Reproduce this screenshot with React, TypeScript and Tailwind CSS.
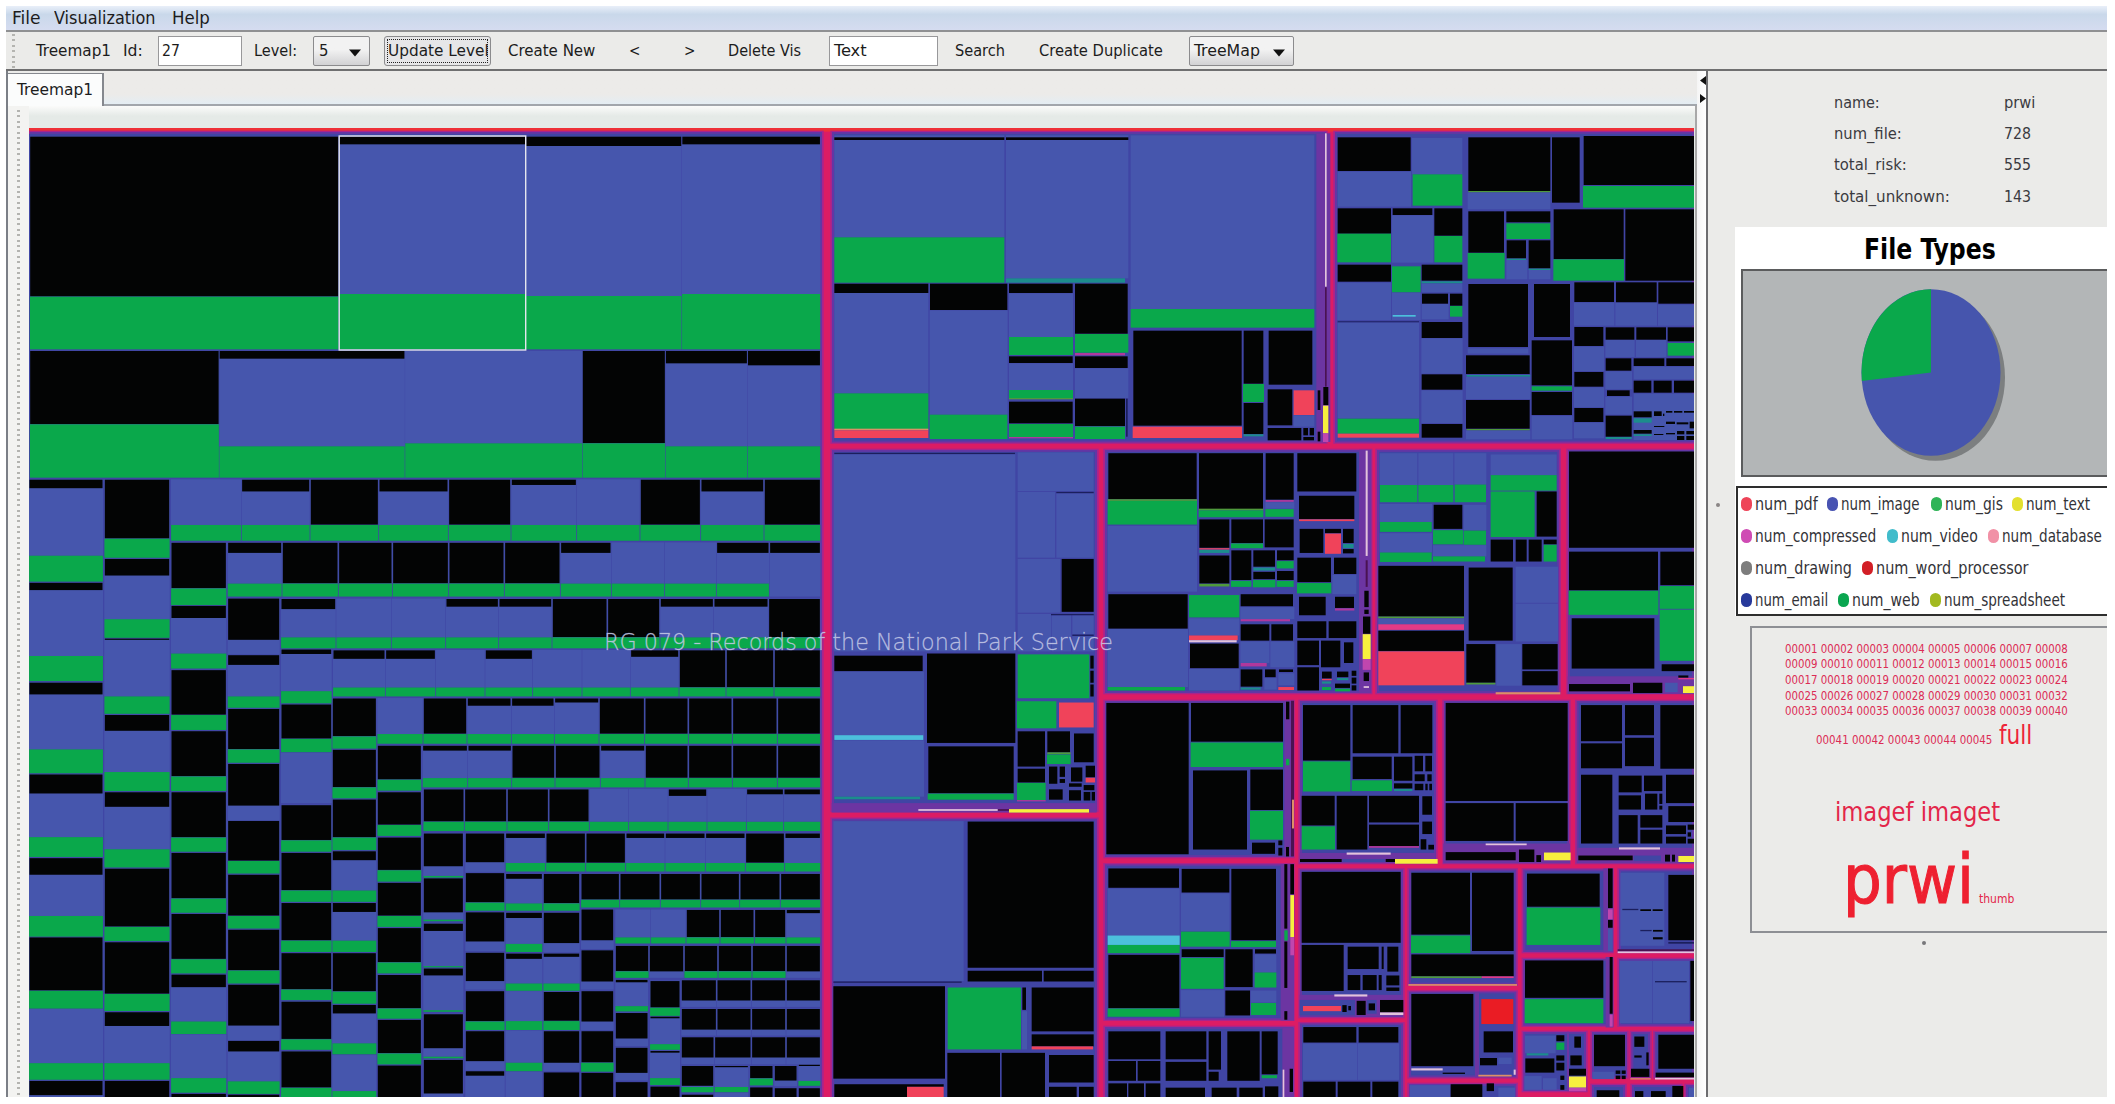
import { useLayoutEffect, useRef } from 'react';
import type { ReactNode } from 'react';

/* Text stretched horizontally to an exact width. */
function Fit({ w, className = '', children }: { w: number; className?: string; children: ReactNode }) {
  const ref = useRef<HTMLSpanElement>(null);
  useLayoutEffect(() => {
    const el = ref.current;
    if (el && el.offsetWidth) el.style.transform = `scaleX(${w / el.offsetWidth})`;
  }, [w]);
  return (
    <span className={'block shrink-0 whitespace-pre ' + className} style={{ width: w }}>
      <span ref={ref} className="inline-block origin-left whitespace-pre">
        {children}
      </span>
    </span>
  );
}

const COLORS: Record<string, string> = {
  k: '#030404',
  b: '#4656ad',
  g: '#0aa84b',
  t: '#1c8d8c',
  c: '#4cc0dc',
  p: '#f0435a',
  q: '#e23a86',
  m: '#b0389c',
  v: '#c046ae',
  w: '#e3c3dc',
  y: '#f7ef3e',
  o: '#4f9a3c',
  n: '#1b1f5c',
  s: '#dc8f66',
  r: '#ea1c24',
  d: '#4a1252',
  u: '#6c35a2',
  i: '#4046a4',
};

type Rect = { c: string; x0: number; y0: number; x1: number; y1: number };

function parse(src: string): Rect[] {
  return src
    .split(/[;\n]/)
    .map((s) => s.trim())
    .filter(Boolean)
    .map((s) => {
      const [c, ...n] = s.split(/\s+/);
      const [x0, y0, x1, y1] = n.map(Number);
      return { c, x0, y0, x1, y1 };
    });
}

/* One directory: unknown share on top, images in the middle, web files at the bottom. */
function cell(x0: number, y0: number, x1: number, y1: number, yb: number, yg: number, ix: number, iy: number): Rect[] {
  const out: Rect[] = [];
  const l = x0 + ix;
  const r = x1 - ix;
  const full = yb >= yg;
  if (!full || yb < y1) out.push({ c: 'b', x0: x0 + ix / 3, y0: y0 - iy / 2, x1: x1 - ix / 3, y1: yg });
  if (yb > y0) out.push({ c: 'k', x0: l, y0, x1: r, y1: Math.min(yb, yg) - (full && yg < y1 ? 1 : 0) });
  if (yg < y1) out.push({ c: 'g', x0: x0 + ix / 2, y0: yg, x1: x1 - ix / 2, y1 });
  return out;
}

const F = 9999;

function row(y0: number, yg: number, y1: number, xs: number[], tops: number[], bare: number[] = []): Rect[] {
  return tops.flatMap((t, i) => {
    const g = bare.includes(i) ? y1 : yg;
    const top = t === F ? (bare.includes(i) ? yg : g) : t;
    return cell(xs[i], y0, xs[i + 1], y1, top, g, 2.4, 2);
  });
}

function column(x0: number, x1: number, cells: number[][]): Rect[] {
  return cells.flatMap(([a, b, g, e]) => cell(x0, a, x1, e ?? g, b, g, 2.4, 2));
}

const topRows: Rect[] = [
  [56, 50, 640, 688, 530, 530],
  [640, 50, 993, 688, 73, 522],
  [993, 50, 1288, 688, 78, 528],
  [1288, 50, 1550, 688, 73, 522],
  [56, 693, 414, 1073, 913, 913],
  [414, 693, 765, 1073, 716, 979],
  [765, 693, 1100, 1073, 0, 970],
  [1100, 693, 1257, 1073, 970, 970],
  [1257, 693, 1412, 1073, 730, 979],
  [1412, 693, 1550, 1073, 736, 979],
].flatMap(([a, b, c, d, e, f]) => cell(a, b, c, d, e, f, 1, 1));

const leftCells: Rect[] = [
  ...column(86, 310, [[24, 45, 212, 276], [279, 297, 460, 522], [526, 555, 691, 750], [753, 800, 908, 957], [960, 1001, 1103, 1154], [1156, 1288, 1288, 1332], [1334, 0, 1467, 1508], [1511, 1546, 1554]]),
  ...column(312, 510, [[24, 170, 170, 217], [220, 261, 369, 415], [417, 420, 560, 603], [606, 645, 747, 794], [797, 833, 938, 983], [986, 1130, 1130, 1165], [1168, 1296, 1296, 1338], [1341, 1375, 1467, 1508], [1511, 1554, 1554]]),
  ...row(24, 136, 175, [512, 724, 930, 1136, 1345, 1533, 1730, 1920, 2102, 2292, 2462], [0, 53, F, 53, F, 37, 0, F, 53, F]),
  ...row(180, 281, 313, [682, 846, 1015, 1177, 1346, 1513, 1681, 1834, 1994, 2149, 2308, 2462], [205, F, F, F, F, F, 205, 0, 0, 205, 205], [10]),
  ...column(512, 680, [[180, 293, 293, 334], [336, 366, 454, 491], [495, 606, 606, 643], [646, 758, 758, 794], [797, 909, 909, 944], [947, 1060, 1060, 1095], [1098, 1210, 1210, 1245], [1248, 1279, 1364, 1395], [1397, 0, 1504, 1540], [1543, 1554, 1554]]),
  ...column(682, 840, [[318, 420, 456], [458, 482, 560, 588], [591, 691, 691, 724], [727, 830, 866], [868, 967, 967, 998], [1001, 1103, 1103, 1134], [1137, 1238, 1238, 1270], [1273, 1374, 1410], [1412, 1438, 1512, 1543], [1545, 1554, 1554]]),
  ...row(319, 414, 441, [842, 1008, 1174, 1337, 1496, 1656, 1822, 1980, 2141, 2305, 2462], [344, 0, 0, 338, 338, F, F, 338, 338, F]),
  ...row(446, 538, 560, [998, 1156, 1307, 1455, 1598, 1746, 1891, 2037, 2178, 2322, 2462], [467, 467, 0, 467, 0, 0, 462, F, F, F]),
  ...column(842, 996, [[444, 455, 547, 577], [580, 665, 665, 698], [700, 0, 824], [829, 916, 916, 944], [947, 1040, 1040, 1068], [1071, 1164, 1164, 1192], [1195, 1285, 1285, 1311], [1315, 1408, 1408, 1434], [1438, 1528, 1528, 1554]]),
  ...row(565, 653, 677, [1131, 1269, 1401, 1534, 1663, 1797, 1934, 2065, 2197, 2332, 2462], [0, F, 583, 583, 575, F, F, F, F, F]),
  ...column(996, 1130, [[565, 659, 659, 689], [692, 785, 785, 812], [815, 909, 909, 940], [943, 965, 1040, 1068], [1071, 1093, 1164, 1192], [1195, 1290, 1290, 1320], [1323, 1344, 1418, 1445], [1448, 0, 1536, 1554]]),
  ...row(682, 762, 785, [1267, 1403, 1535, 1665, 1801, 1935, 2065, 2197, 2332, 2462], [694, 694, F, F, 694, F, F, F, F]),
  ...column(1131, 1265, [[682, 766, 766, 793], [797, 878, 878, 905], [909, 990, 990, 1018], [1021, 1103, 1103, 1130], [1133, 1218, 1218, 1245], [1249, 1332, 1332, 1357], [1360, 1443, 1443, 1470], [1473, 1554, 1554]]),
  ...row(790, 870, 893, [1269, 1393, 1521, 1646, 1768, 1886, 2004, 2121, 2239, 2351, 2462], [F, F, F, F, 0, 0, 806, 0, 802, 802]),
  ...row(899, 972, 993, [1516, 1637, 1757, 1877, 1995, 2116, 2236, 2354, 2462], [910, F, F, 910, 910, 910, F, 910]),
  ...column(1269, 1391, [[899, 980, 1004, 1008], [1010, 1094, 1112, 1116], [1122, 1140, 1227, 1230], [1233, 1250, 1336, 1340], [1346, 1430, 1451, 1455], [1459, 1542, 1554]]),
  ...column(1395, 1515, [[899, 970, 994], [997, 1070, 1070, 1090], [1094, 1166, 1190], [1194, 1264, 1285], [1289, 1364, 1364, 1385], [1388, 1462, 1485], [1487, 1498, 1554]]),
  ...row(999, 1063, 1082, [1742, 1859, 1981, 2102, 2219, 2341, 2462], [F, F, F, F, F, F]),
  ...column(1516, 1628, [[999, 1011, 1072, 1090], [1095, 1108, 1172, 1192], [1196, 1209, 1270, 1288], [1290, 0, 1363, 1385], [1387, 0, 1466, 1487], [1489, 0, 1554]]),
  ...column(1629, 1740, [[999, 1072, 1072, 1090], [1095, 1170, 1193], [1196, 1204, 1270, 1288], [1291, 1363, 1363, 1385], [1388, 1466, 1487], [1490, 1554, 1554]]),
  ...row(1088, 1156, 1171, [1845, 1952, 2058, 2160, 2263, 2358, 2462], [0, 0, F, F, F, 1096]),
  ...column(1742, 1842, [[1087, 1163, 1185], [1188, 1265, 1285], [1289, 1364, 1385], [1388, 1466, 1466, 1488], [1491, 1554, 1554]]),
  ...row(1177, 1240, 1256, [1845, 1947, 2052, 2154, 2256, 2358, 2462], [F, F, F, F, F, F], [1, 5]),
  ...column(1845, 1945, [[1261, 1267, 1326, 1339], [1343, 1406, 1425], [1429, 1491, 1510], [1514, 1554, 1554]]),
  ...column(1949, 2041, [[1264, 1330, 1330, 1350], [1352, 1356, 1420, 1434], [1437, 1441, 1504, 1521], [1525, 1554, 1554]]),
  ...row(1262, 1312, 1328, [2043, 2150, 2254, 2358, 2462], [F, F, F, F], [0, 1, 2, 3]),
  ...row(1333, 1384, 1399, [2043, 2150, 2254, 2358, 2462], [F, F, F, F], [0, 1, 2, 3]),
  ...row(1403, 1453, 1470, [2043, 2143, 2254, 2358, 2462], [F, F, F, F], [0, 1, 2, 3]),
  ...column(2043, 2142, [[1474, 1523, 1526, 1539], [1545, 1554, 1554]]),
  ...column(2143, 2246, [[1474, 1477, 1526, 1539], [1541, 0, 1554]]),
  ...column(2248, 2320, [[1474, 1505, 1505, 1522], [1527, 1554, 1554]]),
  ...column(2322, 2392, [[1474, 1510, 1524], [1529, 1554, 1554]]),
  ...column(2394, 2462, [[1471, 1474, 1511, 1523], [1529, 1554, 1554]]),
];

const records = parse(`
b 58 46 568 352;k 58 52 568 60;g 58 352 568 488;b 573 46 940 475;k 573 52 940 60;t 573 475 930 488
b 947 46 1498 567;g 947 567 1498 623
b 58 490 340 820;k 58 491 340 519;g 58 820 340 927;s 58 926 340 931;p 58 931 340 954
k 345 491 577 570;b 344 571 578 884;g 344 884 577 957
k 582 491 773 519;b 582 520 774 651;g 582 651 774 705;k 582 709 773 729;b 582 730 774 810;g 582 810 774 836;o 582 834 774 838
k 582 845 773 910;g 582 912 774 951;m 582 951 774 955
k 780 491 938 641;g 780 642 940 698;m 780 699 930 706;k 780 709 938 744;b 780 745 940 834;k 780 836 930 918;g 780 920 930 957;n 933 836 938 950
k 955 632 1280 917;p 953 920 1281 954;k 1286 632 1345 791;g 1284 792 1347 846;k 1286 849 1345 942;t 1286 943 1345 949
k 1361 632 1492 794;k 1358 808 1432 916;p 1436 811 1498 885;b 1436 886 1498 920;k 1358 924 1459 961
k 1465 924 1479 946;k 1484 924 1497 946;k 1465 951 1497 961;u 1504 40 1546 966;k 1508 811 1516 870;k 1508 935 1516 964
w 1530 40 1535 500;d 1530 502 1535 800;k 1525 801 1540 855;y 1524 857 1540 940;v 1524 940 1540 966`);

const topRight = parse(`
k 248 52 467 153;b 248 155 468 260;b 471 54 622 163;g 473 163 622 257
k 248 265 408 341;g 247 341 408 427;k 413 265 532 285;b 411 286 535 428;k 538 265 622 347;g 538 348 622 427
k 248 434 408 485;b 247 488 408 600;g 411 439 497 517;b 411 518 497 600;c 413 585 482 590
k 500 434 622 482;t 500 484 622 490;b 500 491 622 517;k 501 521 579 551;b 500 552 581 598;k 585 521 622 557;g 585 558 622 590
n 248 604 492 607;b 248 608 492 895;g 248 896 492 941;p 248 941 492 953
k 500 606 622 654;b 499 655 623 761;k 500 763 622 809;b 499 811 623 909;k 500 912 622 953
k 640 52 886 213;o 640 213 886 217;b 638 218 886 268;k 891 52 974 248;k 986 48 1317 195;g 984 198 1317 263
k 640 274 747 398;g 638 399 749 476;k 754 274 886 307;g 754 310 886 357;k 755 361 813 415;t 755 416 813 420;b 754 420 817 478
k 821 361 886 445;t 821 446 886 450;b 821 450 886 478;k 896 268 1106 417;g 895 418 1107 482;k 1111 268 1317 482
k 640 492 819 681;b 638 685 820 701;k 837 492 945 651;k 958 487 1077 546;b 957 548 1078 617;k 1083 487 1205 547;b 1081 548 1206 617;k 1210 487 1317 551;b 1209 554 1317 617
k 633 706 824 762;t 635 765 826 770;b 633 771 826 837;k 633 840 824 926;o 635 927 824 931;b 633 932 826 958
k 830 661 951 796;g 830 799 951 812;k 830 816 951 885;b 830 888 952 958
k 958 621 1045 678;b 957 680 1047 753;k 958 756 1045 800;b 957 802 1047 862;k 958 864 1045 906;b 957 908 1047 955
k 1052 622 1138 659;b 1051 660 1139 711;k 1144 622 1233 659;b 1143 660 1234 711;k 1238 622 1317 664;g 1238 669 1317 707
k 1052 715 1129 752;b 1051 754 1131 808;k 1056 811 1124 828;b 1051 830 1131 884;k 1052 887 1130 950;t 1052 951 1130 957
k 1136 715 1228 738;k 1234 715 1317 738;b 1136 740 1317 778;k 1136 782 1189 818;k 1196 782 1250 818;k 1257 782 1317 818;b 1136 821 1317 960
k 1136 874 1190 892;t 1136 895 1190 908;k 1136 930 1190 941;t 1136 943 1190 948;k 1197 874 1220 888;k 1224 881 1228 888
k 1233 873 1252 878;k 1257 873 1282 878;k 1287 873 1317 878;k 1233 905 1260 912;k 1265 907 1300 913;k 1304 905 1317 925;k 1197 918 1228 921;k 1197 942 1225 945;k 1233 939 1260 943
k 1266 933 1288 943;k 1294 933 1317 943;k 1266 948 1288 960;k 1294 948 1317 960`);

const middle = parse(`
n 58 53 600 56;b 56 57 601 515;b 608 52 836 142;b 608 144 720 297;n 724 144 836 147;b 724 148 836 297;b 608 300 735 425;k 740 300 836 423
b 608 428 708 515;n 708 428 836 431;b 710 432 768 515;b 772 432 836 475;n 772 476 836 479;b 772 480 836 515
k 58 525 323 561;b 56 562 327 710;c 58 710 325 721;b 56 722 327 853;t 58 853 315 859;k 336 520 601 728;k 340 736 596 845;g 338 846 596 860
g 608 522 823 624;k 826 525 836 555;k 826 560 836 588;k 826 592 836 620;g 606 631 724 694;p 732 634 836 692
k 608 701 690 783;k 697 701 765 750;o 697 750 767 754;g 696 755 767 777;k 777 706 836 773;k 608 788 690 820;g 606 821 692 861;m 606 861 692 864
k 702 783 727 823;k 734 783 750 807;k 734 812 750 821;k 768 785 802 818;k 812 781 840 808;p 812 809 840 820;k 702 836 743 860;k 762 822 800 830;k 762 838 798 862
k 806 826 838 838;k 806 842 826 862;k 830 842 840 862;u 50 868 845 890;d 548 882 582 886;w 310 882 548 886;y 582 882 822 890
b 55 910 446 1282;n 55 1283 440 1286;k 458 911 836 1251;k 458 1258 681 1283;k 686 1258 836 1283
k 55 1294 390 1509;g 398 1297 618 1441;k 622 1297 633 1349;b 621 1352 636 1441;k 650 1297 836 1399;k 650 1406 836 1434;p 650 1434 834 1441
k 397 1449 555 1554;k 560 1449 690 1554;k 702 1454 836 1518;k 702 1528 785 1554;k 792 1528 836 1554;k 58 1522 276 1554;k 276 1522 386 1528;p 276 1528 386 1554`);

const center = parse(`
k 40 54 305 161;o 38 161 306 165;g 38 165 306 220;b 38 223 306 376;k 312 54 504 184;o 311 183 505 187;g 311 187 505 203;k 512 54 596 162;m 512 163 596 167;b 511 168 598 183;g 511 184 596 202
k 313 208 403 274;p 313 275 403 278;t 313 279 403 286;k 313 292 403 357;o 313 358 403 364
k 409 208 504 263;g 408 264 504 275;k 509 208 596 273;k 409 280 469 349;g 408 351 469 365;k 475 280 540 318;t 475 320 540 327;k 475 330 540 347;g 474 349 541 366;k 546 280 596 303;g 545 305 596 322;k 546 328 596 349;g 545 351 596 365
k 40 382 278 462;b 38 463 279 598;g 38 598 270 606;g 282 384 433 436;b 282 438 433 478;p 282 478 428 489;w 282 489 425 494;k 285 497 431 554;b 282 556 433 606
k 437 382 594 410;b 436 412 598 440;m 437 440 585 445;k 437 452 523 490;k 529 452 594 490;b 436 492 523 542;b 526 492 598 552;m 437 542 515 550;k 437 557 502 597;t 437 599 497 604;k 510 557 542 575;b 508 577 545 604;k 552 557 594 563;b 550 566 598 594;p 550 598 597 605
k 607 54 784 143;k 612 153 778 207;p 612 208 778 212;k 614 230 685 286;k 690 230 738 240;p 690 241 738 288;k 744 230 776 263;t 744 265 776 275;k 744 277 776 287
k 607 297 708 354;g 606 356 709 380;k 717 297 784 335;b 712 337 784 382;k 612 388 692 431;k 720 388 777 414;m 720 415 778 420;k 607 445 694 484;k 701 445 784 484
k 607 490 672 547;k 678 490 736 552;k 747 494 775 542;k 607 552 672 606;k 681 562 710 578;p 681 579 710 582;t 681 585 708 590;g 681 598 708 605;k 726 562 760 575;t 726 577 760 582;k 720 590 765 600;g 720 602 765 608
k 770 560 784 572;k 770 576 784 590;k 770 594 784 606;u 792 46 829 612
w 812 48 818 293;d 812 303 818 365;k 808 374 821 412;k 808 418 821 428;k 804 434 826 474;y 803 475 827 533;v 803 533 827 558;k 806 564 822 584;w 806 596 822 600
k 34 635 281 987;k 288 635 564 725;g 287 727 564 784;k 294 792 456 976;k 466 790 564 884;g 465 886 564 953;k 471 960 540 986;k 550 955 562 966;k 550 972 562 990
u 568 630 597 992;k 573 632 583 673;g 573 765 583 780;d 588 630 597 992;s 591 860 597 927;k 573 970 582 992
k 40 1020 252 1065;b 38 1067 254 1176;c 38 1176 254 1198;g 38 1198 254 1217;k 40 1221 253 1345;g 38 1346 254 1365
k 260 1021 403 1076;b 258 1078 404 1166;g 258 1167 404 1202;k 409 1021 543 1187;g 408 1189 543 1203;k 260 1208 386 1226;g 258 1228 386 1300;b 258 1303 387 1365;k 391 1208 473 1296;k 391 1304 465 1362
k 480 1208 543 1218;b 479 1220 544 1262;g 479 1262 544 1297;b 468 1304 544 1332;g 468 1333 543 1361;u 557 1010 597 1374
k 568 1010 577 1160;g 568 1164 578 1188;k 568 1190 577 1298;k 568 1352 577 1372;k 586 1010 597 1080;y 586 1082 597 1180;v 586 1180 597 1222
k 40 1399 196 1464;k 212 1399 334 1464;k 341 1399 378 1488;k 397 1399 494 1514;k 500 1399 548 1499;g 500 1501 546 1508;k 40 1468 123 1514;k 128 1468 196 1514;k 212 1470 334 1514;k 341 1493 371 1514
k 40 1520 96 1554;k 100 1520 147 1554;k 152 1520 196 1554;k 212 1530 330 1554;k 350 1530 425 1554;k 433 1530 503 1554;k 510 1527 550 1554;u 562 1390 597 1554;w 563 1488 568 1554;k 584 1486 594 1540`);

const right = parse(`
b 284 54 397 128;g 285 128 397 168;b 400 54 505 128;g 400 128 505 168;b 508 54 604 127;g 509 127 603 168
b 284 172 441 214;g 285 214 440 237;b 284 240 441 285;g 285 285 440 307;k 446 174 532 230;g 444 233 534 266;b 536 174 604 233;g 536 234 603 267;b 444 268 604 294;g 444 294 600 306
b 617 57 815 105;g 617 105 815 141;g 617 143 749 249;k 755 143 815 248;k 617 255 684 306;k 692 255 725 306;k 731 255 770 306;k 776 255 815 266;g 776 267 815 306
k 280 316 537 434;o 280 434 537 438;b 280 439 537 452;q 280 452 537 465;k 280 467 537 514;p 280 515 538 594
k 551 320 683 490;b 692 318 819 402;b 692 404 819 492;k 544 498 631 588;o 544 588 631 592;b 634 498 709 595;k 712 498 818 557;k 712 561 818 594;s 632 610 826 615
k 852 50 1227 274;k 852 283 1119 373;g 851 374 1120 430;k 1126 283 1227 361;g 1124 363 1227 416;g 1124 418 1227 537;k 860 438 1108 555;k 1130 545 1227 561
u 848 573 1227 614;k 1180 571 1210 576;q 1180 577 1227 580;k 852 591 1035 608;k 1044 588 1132 612;b 1140 588 1178 610;y 1194 596 1227 612
k 54 640 196 769;g 54 771 196 841;k 203 640 340 752;k 347 640 442 752;k 203 760 320 812;g 200 815 321 840;k 327 760 382 816;k 327 822 382 834;t 327 835 382 840
k 389 758 414 794;k 421 758 441 794;k 389 801 419 817;k 389 823 415 838;k 427 801 440 817;k 421 823 428 838;k 433 823 441 838
k 50 851 149 920;g 50 922 150 976;k 155 851 247 976;k 252 851 402 913;k 252 918 402 968;m 252 968 402 972;k 412 852 441 895;k 412 911 441 940;k 407 952 424 976;k 430 965 447 976
u 44 984 452 1008;w 185 983 317 988;k 45 998 170 1005;i 172 998 300 1005;k 302 998 330 1005;y 330 998 458 1009
k 482 635 848 863;k 482 868 686 956;k 692 868 848 956;u 475 962 855 1008;w 602 962 725 966;k 482 982 692 1001;k 702 976 748 1005;k 754 989 768 1005;y 777 983 857 1001
k 888 640 1011 724;k 888 729 1011 787;k 1020 640 1107 710;k 1020 716 1107 782;k 1126 640 1227 788;k 888 802 982 962;k 1001 804 1070 843;k 1077 804 1132 840;k 1001 850 1068 883;k 1080 846 1117 883;k 1123 846 1132 870;k 1123 874 1132 883
k 1001 896 1058 962;k 1066 896 1132 925;k 1066 930 1132 962;k 1143 802 1227 868;k 1150 875 1227 912;k 1143 920 1203 940;k 1143 946 1203 962;k 1208 918 1227 930;k 1208 936 1218 946;k 1208 951 1227 962
u 876 972 1227 1008;w 1002 971 1125 976;k 880 990 1043 1001;i 1046 990 1128 1003;k 1140 988 1155 1004;k 1161 988 1170 1004;y 1180 991 1227 1005
k 50 1028 347 1193;k 50 1198 176 1305;k 188 1202 281 1254;k 290 1202 296 1254;k 307 1202 340 1260;k 188 1268 226 1303;k 233 1268 275 1303;k 281 1268 290 1303;k 304 1269 343 1292;k 304 1297 343 1305
u 44 1314 354 1364;w 148 1313 247 1318;i 44 1326 210 1362;p 54 1340 168 1352;k 172 1338 185 1354;k 190 1340 198 1350;k 215 1328 242 1361;i 245 1326 275 1358;k 251 1334 270 1350;k 285 1326 355 1355;w 285 1355 355 1361
k 55 1389 214 1425;k 221 1389 340 1425;b 54 1427 217 1512;b 219 1427 342 1512;k 55 1516 152 1554;k 158 1516 256 1554;k 262 1516 340 1554
k 379 1030 555 1174;g 378 1176 556 1217;k 561 1030 686 1212;k 379 1220 686 1271;o 379 1271 590 1275;q 590 1271 686 1275;s 370 1289 696 1293
k 379 1312 565 1480;i 379 1485 565 1500;w 379 1485 473 1490;k 473 1495 540 1498;u 570 1308 582 1506;r 589 1324 685 1382;k 596 1399 684 1448;k 585 1461 636 1478;b 640 1460 680 1475;s 580 1500 680 1504;w 686 1488 692 1500
k 726 1032 944 1109;g 725 1111 946 1198;u 955 1020 985 1215;k 969 1020 983 1112;v 969 1115 983 1138;k 969 1140 983 1158;b 969 1160 983 1212
k 720 1234 955 1321;g 719 1324 955 1380;u 962 1226 985 1390;k 974 1226 983 1358;v 974 1360 983 1388
b 1006 1030 1138 1200;n 1012 1114 1060 1117;k 1066 1115 1098 1119;k 1103 1115 1133 1119;n 1066 1163 1100 1166;k 1104 1163 1133 1167;k 1104 1180 1133 1185;k 1150 1035 1227 1187;n 1150 1191 1227 1195;d 998 1208 1227 1213;w 998 1213 1227 1217
b 1004 1235 1102 1380;b 1104 1235 1212 1380;n 1110 1282 1205 1285;k 1216 1235 1227 1375
b 720 1409 812 1450;t 725 1450 790 1455;g 814 1425 838 1442;k 814 1408 838 1422;k 721 1462 808 1495;b 718 1503 770 1535;b 774 1508 815 1535;k 814 1455 838 1467;k 814 1472 838 1490;k 826 1502 838 1512;k 826 1524 838 1535
u 846 1400 852 1538;k 868 1411 888 1437;k 856 1455 890 1478;k 852 1486 903 1502;y 852 1504 903 1530;v 852 1530 903 1538
k 927 1407 1020 1480;b 922 1493 988 1510;k 992 1490 1006 1498;k 1010 1490 1022 1498;k 992 1502 1006 1510;k 1010 1502 1022 1510;k 1048 1411 1078 1435;k 1048 1455 1070 1460;k 1084 1448 1091 1478;k 1038 1486 1093 1505;s 1036 1508 1097 1511
k 1120 1407 1227 1486;k 1112 1495 1227 1506;w 1110 1507 1227 1511
b 375 1524 495 1554;k 497 1522 592 1554;k 605 1520 627 1538;b 640 1530 690 1554
k 935 1536 1003 1554;k 1050 1538 1075 1554;k 1098 1538 1142 1554;k 1162 1526 1195 1554;b 1212 1530 1227 1554`);

/* Collection frames: x0 y0 x1 y1 in map pixels. */
const SECTIONS = [
  [29, 131, 823, 1098], [831, 131, 1327, 443.5], [1334, 131, 1695, 443.5],
  [831, 449, 1098, 811.8], [831, 817.8, 1098, 1098], [1104, 449, 1371.7, 694], [1376, 449, 1560.3, 694],
  [1567, 449, 1695, 694], [1104, 700, 1294, 858], [1104, 863.4, 1294, 1020.7], [1104, 1026, 1294, 1098],
  [1299, 700, 1437, 864], [1443, 700, 1570, 864], [1575.7, 700, 1695, 864],
  [1299, 868.5, 1404, 1018], [1299, 1022.4, 1404, 1098], [1408, 868.5, 1517.3, 985.5], [1408, 990.6, 1517.3, 1078.3],
  [1522.3, 868.5, 1613, 953], [1522.3, 958, 1613, 1026.7], [1618, 868.5, 1695, 953], [1618, 958, 1695, 1026.7],
  [1522.3, 1031, 1587, 1092], [1591, 1031, 1628, 1078.3], [1630.3, 1031, 1651, 1078.3], [1653.7, 1031, 1695, 1078.3],
  [1408, 1083, 1517.3, 1098], [1591, 1084, 1626, 1098], [1631, 1084, 1682, 1098], [1685, 1084, 1695, 1098],
];

function Layer({ at, scale, rects }: { at: [number, number]; scale: [number, number]; rects: Rect[] }) {
  return (
    <g transform={`translate(${at[0]} ${at[1]}) scale(${1 / scale[0]} ${1 / scale[1]})`}>
      {rects.map((r, i) => (
        <rect key={i} x={r.x0} y={r.y0} width={r.x1 - r.x0} height={Math.max(0, r.y1 - r.y0)} fill={COLORS[r.c]} />
      ))}
    </g>
  );
}

const TALL = 1568 / 674;
const LEFT = 1568 / 634;

function TreeMap() {
  return (
    <svg className="block" width="1665" height="969" viewBox="29 128 1665 969">
      <rect x="29" y="128" width="1666" height="970" fill="#dc1c64" />
      <rect x="29" y="128" width="1666" height="3.6" fill="#ee3037" />
      {SECTIONS.map(([a, b, c, d], i) => (
        <g key={i}>
          <rect x={a - 0.7} y={b - 0.3} width={c - a + 1.4} height={d - b + 0.6} fill="#a8248c" />
          <rect x={a + 1} y={b + 1} width={c - a - 2} height={d - b - 2} fill="#6436a4" />
          <rect x={a + (i ? 3 : 0)} y={b + 2.8} width={c - a - (i ? 6 : 3)} height={d - b - (d > 1095 ? 2.8 : 5.6)} fill="#4045a4" />
        </g>
      ))}
      <Layer at={[0, 120]} scale={[1568 / 830, 3]} rects={topRows} />
      <Layer at={[0, 470]} scale={[3, LEFT]} rects={leftCells} />
      <Layer at={[815, 120]} scale={[3, 3]} rects={records} />
      <Layer at={[1255, 120]} scale={[3, 3]} rects={topRight} />
      <Layer at={[815, 430]} scale={[3, TALL]} rects={middle} />
      <Layer at={[1095, 430]} scale={[3, TALL]} rects={center} />
      <Layer at={[1285, 430]} scale={[3, TALL]} rects={right} />
      <rect x="339.2" y="136" width="186.5" height="214" fill="none" stroke="#e4e6ee" strokeWidth="1.4" />
      <text x="604" y="650" textLength="509" lengthAdjust="spacingAndGlyphs" fontSize="23.5" fill="#c6cbe8" fillOpacity="0.85" style={{ fontFamily: '"DejaVu Sans Light","DejaVu Sans",sans-serif', fontWeight: 200, fontStretch: 'normal' }} stroke="#c6cbe8" strokeOpacity="0.45" strokeWidth="0.5">
        RG 079 - Records of the National Park Service
      </text>
    </svg>
  );
}

const LEGEND: [string, string, number, number][][] = [
  [['#ee4458', 'num_pdf', 63, 86], ['#4853b2', 'num_image', 79, 103.7], ['#2fb457', 'num_gis', 58, 81], ['#e3e02f', 'num_text', 64, 80]],
  [['#cf4bb4', 'num_compressed', 121.5, 145.7], ['#41bccb', 'num_video', 77, 101.6], ['#f191a6', 'num_database', 100, 116]],
  [['#7d7d7d', 'num_drawing', 96.5, 120.7], ['#d21f26', 'num_word_processor', 153, 180]],
  [['#27399b', 'num_email', 73, 96.7], ['#0aa650', 'num_web', 68, 92.6], ['#a2b91f', 'num_spreadsheet', 121.5, 150]],
];

function Info({ k, kw, v, vw }: { k: string; kw: number; v: string; vw: number }) {
  return (
    <div className="flex h-[31.4px] items-center">
      <div className="w-[170px]"><Fit w={kw}>{k}</Fit></div>
      <Fit w={vw}>{v}</Fit>
    </div>
  );
}

function codes(from: number, to: number) {
  return Array.from({ length: to - from + 1 }, (_, i) => String(from + i).padStart(5, '0')).join(' ');
}

function Caret() {
  return (
    <svg width="12" height="8" viewBox="0 0 12 8" className="mt-[4px] block shrink-0">
      <path d="M0 0.5H12L6 7.5Z" fill="#111" />
    </svg>
  );
}

function Grip({ h }: { h: string }) {
  return <div className={'w-[3px] shrink-0 bg-[repeating-linear-gradient(to_bottom,#b4b4b0_0_2px,transparent_2px_5.4px)] ' + h} />;
}

export default function App() {
  return (
    <div className="h-[1104px] w-[2115px] overflow-hidden bg-white pt-[6px] pl-[6px] font-['DejaVu_Sans_Condensed','DejaVu_Sans',sans-serif] text-[16.5px] leading-none text-[#1c1c1c] [font-stretch:condensed]">
      <div className="flex h-[1091px] w-[2101px] flex-col overflow-hidden bg-[#ebebe9]">
        <div className="flex h-[26px] shrink-0 items-center border-b-2 border-[#8f9092] bg-linear-to-b from-[#e9eff9] via-[#c9d8ea] via-35% to-[#d5dcf0] pl-[6px] text-[17px]">
          <Fit w={28} className="mr-[14px]">File</Fit>
          <Fit w={102} className="mr-[16px]">Visualization</Fit>
          <Fit w={38}>Help</Fit>
        </div>

        <div className="flex h-[39px] shrink-0 items-center border-b-2 border-[#6f6f70] pt-[1px] pl-[6px]">
          <Grip h="h-[34px]" />
          <Fit w={75} className="ml-[21px]">Treemap1</Fit>
          <Fit w={20} className="ml-[12px]">Id:</Fit>
          <div className="ml-[15px] flex h-[30px] w-[84px] items-center border border-[#98989a] bg-white pl-[3px]"><Fit w={18}>27</Fit></div>
          <Fit w={43} className="ml-[12px]">Level:</Fit>
          <div className="ml-[16px] flex h-[30px] w-[57px] items-center justify-between rounded-[2px] border border-[#8b8b8d] bg-linear-to-b from-[#f2f2f2] from-45% to-[#d2d2d4] pr-[8px] pl-[5px]"><Fit w={9}>5</Fit><Caret /></div>
          <div className="ml-[14px] flex h-[30px] w-[107px] items-center justify-center rounded-[3px] border border-[#8b8b8d] bg-[#e6e6e8] p-[2px]">
            <div className="flex h-full w-full items-center border border-dotted border-[#222]"><Fit w={101}>Update Level</Fit></div>
          </div>
          <Fit w={87} className="ml-[17px]">Create New</Fit>
          <Fit w={11} className="ml-[34px]">&lt;</Fit>
          <Fit w={11} className="ml-[44px]">&gt;</Fit>
          <Fit w={73} className="ml-[33px]">Delete Vis</Fit>
          <div className="ml-[28px] flex h-[30px] w-[109px] items-center border border-[#98989a] bg-white pl-[4px]"><Fit w={33}>Text</Fit></div>
          <Fit w={50} className="ml-[17px]">Search</Fit>
          <Fit w={124} className="ml-[34px]">Create Duplicate</Fit>
          <div className="ml-[26px] flex h-[30px] w-[105px] items-center justify-between rounded-[2px] border border-[#8b8b8d] bg-linear-to-b from-[#f2f2f2] from-45% to-[#d2d2d4] pr-[8px] pl-[4px]"><Fit w={66}>TreeMap</Fit><Caret /></div>
        </div>

        <div className="flex min-h-0 flex-1">
          <div className="flex w-[1691px] shrink-0 flex-col border-l-2 border-[#7b7f86]">
            <div className="flex h-[35px] shrink-0 items-end">
              <div className="flex h-[33px] w-[96px] items-center border-t border-r-2 border-[#85888e] bg-[#fbfcfc] pl-[9px]"><Fit w={76}>Treemap1</Fit></div>
              <div className="h-full flex-1 border-b-2 border-[#a2a6ac] bg-linear-to-b from-[#ecebe9] from-70% to-[#e4edf3]" />
            </div>
            <div className="flex min-h-0 flex-1 border-r-2 border-[#a8a8a8] bg-linear-to-b from-[#fbfbfa] to-[#e5eae7] to-[10px]">
              <div className="flex w-[21px] shrink-0 justify-center bg-[#f3f3f1] pt-[4px]"><Grip h="h-full" /></div>
              <div className="pt-[22px]"><TreeMap /></div>
            </div>
          </div>

          <div className="flex w-[11px] shrink-0 flex-col items-end border-r-2 border-[#6d6d70] bg-linear-to-r from-[#f5f5f5] to-[#ffffff] pt-[4px]">
            <svg width="6" height="34" viewBox="0 0 6 34" className="block">
              <path d="M6 1V10L0 5.5Z M0 19V28L6 23.5Z" fill="#111" />
            </svg>
          </div>

          <div className="relative flex flex-1 flex-col">
            <div className="absolute top-[432px] left-[8px] h-[4px] w-[4px] rounded-full bg-[#8a8585]" />
            <div className="mt-[16px] h-[140px] pl-[126px] text-[16px] text-[#3a3a40]">
              <Info k="name:" kw={46} v="prwi" vw={31.5} />
              <Info k="num_file:" kw={67.5} v="728" vw={26.5} />
              <Info k="total_risk:" kw={73} v="555" vw={26.5} />
              <Info k="total_unknown:" kw={115.5} v="143" vw={26.5} />
            </div>

            <div className="ml-[27px] flex h-[389px] shrink-0 flex-col bg-white">
              <div className="flex h-[42px] items-center pt-[4px] pl-[129px]">
                <Fit w={132} className="text-[28px] font-bold text-black">File Types</Fit>
              </div>
              <div className="ml-[6px] h-[208px] border-2 border-r-0 border-[#5b5c5d] bg-[#b3b6b7]">
                <svg width="364" height="204" viewBox="1743 271 364 204" className="block">
                  <ellipse cx="1935.5" cy="377.5" rx="69.5" ry="83.3" fill="#7c7f80" />
                  <ellipse cx="1931" cy="372.5" rx="69.5" ry="83.3" fill="#4655ad" />
                  <path d="M1931 372.5V289.2A69.5 83.3 0 0 0 1861.9 381Z" fill="#0aa84b" />
                </svg>
              </div>
              <div className="mt-[9px] ml-[1px] flex h-[130px] flex-col border-2 border-r-0 border-[#2e2e2e] pl-[3px] text-[#333338]">
                {LEGEND.map((line, i) => (
                  <div key={i} className="flex h-[32px] shrink-0 items-center">
                    {line.map(([color, label, w, step]) => (
                      <div key={label} className="flex shrink-0 items-center" style={{ width: step }}>
                        <div className="mr-[3px] h-[14px] w-[11px] shrink-0 rounded-full" style={{ backgroundColor: color }} />
                        <Fit w={w} className="text-[17px]">{label}</Fit>
                      </div>
                    ))}
                  </div>
                ))}
              </div>
            </div>

            <div className="mt-[10px] ml-[42px] h-[307px] border-2 border-r-0 border-[#8d8f94] pt-[13px] text-[#e3264a]">
              <div className="ml-[33px] text-[12px] text-[#dc2c55]">
                {[1, 9, 17, 25, 33].map((n) => (
                  <div key={n} className="flex h-[15.6px] items-center"><Fit w={283}>{codes(n, n + 7)}</Fit></div>
                ))}
              </div>
              <div className="ml-[64px] flex h-[37px] items-baseline pt-[2px]">
                <Fit w={176} className="text-[12px] text-[#dc2c55]">{codes(41, 45)}</Fit>
                <Fit w={33} className="ml-[7px] text-[27px] text-[#ee2338]">full</Fit>
              </div>
              <div className="mt-[42px] ml-[83px] h-[40px]">
                <Fit w={165} className="text-[27px]">imagef imaget</Fit>
              </div>
              <div className="mt-[8px] ml-[91px] flex items-baseline">
                <Fit w={131} className="text-[68px] text-[#ee2030] [-webkit-text-stroke:1px_#ee2030]">prwi</Fit>
                <Fit w={35} className="ml-[5px] text-[12px]">thumb</Fit>
              </div>
            </div>
            <div className="mt-[8px] ml-[214px] h-[4px] w-[4px] rounded-full bg-[#77777a]" />
          </div>
        </div>
      </div>
    </div>
  );
}
